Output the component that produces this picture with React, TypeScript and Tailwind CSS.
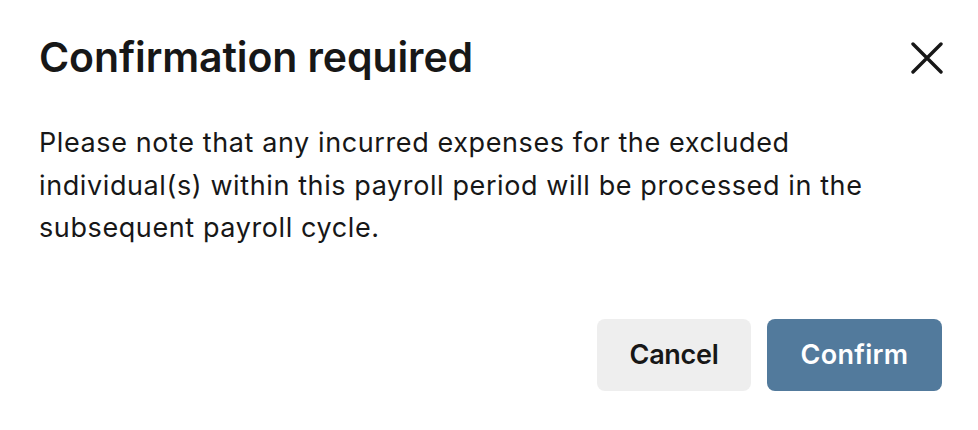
import React from "react";

export default function App() {
  return (
    <div className="w-[978px] h-[430px] bg-white font-['Inter',sans-serif] text-[#171717] flex flex-col pl-[39px] pr-[35px] pt-[33px]">
      <div className="flex items-start justify-between">
        <h1 className="text-[41px] font-semibold leading-[48px] tracking-[-0.1px]">Confirmation required</h1>
        <button className="mt-[9px] w-[32px] h-[32px] flex items-center justify-center" aria-label="Close">
          <svg width="32" height="32" viewBox="0 0 32 32" fill="none" stroke="#171717" strokeWidth="3.4" strokeLinecap="round">
            <path d="M2 2 L30 30 M30 2 L2 30" />
          </svg>
        </button>
      </div>
      <p className="mt-[41px] text-[27px] leading-[42.5px] tracking-[0.6px] w-[860px]">
        Please note that any incurred expenses for the excluded individual(s) within this payroll period will be processed in the subsequent payroll cycle.
      </p>
      <div className="mt-[69.5px] flex justify-end gap-[16px] pr-[1px]">
        <button className="w-[154px] h-[72px] rounded-[8px] bg-[#eeeeee] text-[27px] font-semibold text-[#171717] tracking-[-0.3px]">Cancel</button>
        <button className="w-[175px] h-[72px] rounded-[8px] bg-[#527a9c] text-[27px] font-semibold text-white tracking-[0.3px]">Confirm</button>
      </div>
    </div>
  );
}
